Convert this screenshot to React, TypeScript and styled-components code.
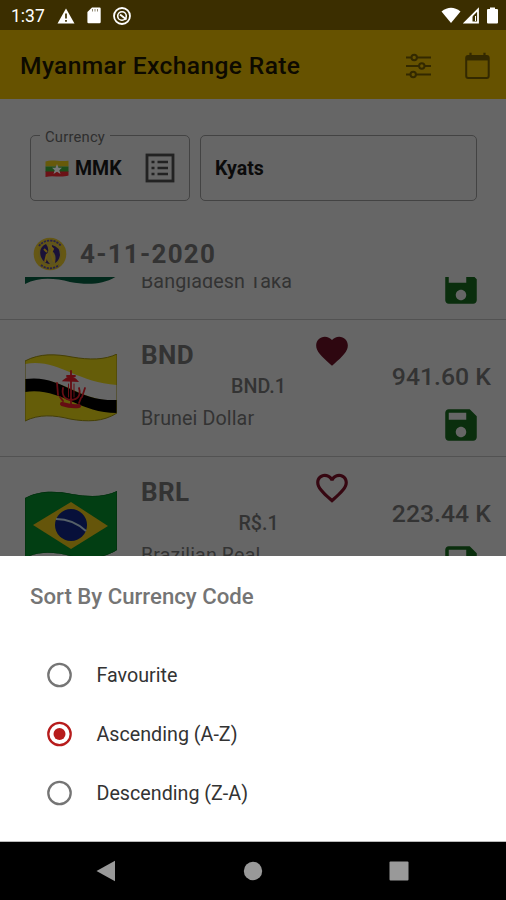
import React from "react";
import styled, { createGlobalStyle } from "styled-components";

const GlobalStyle = createGlobalStyle`
  * { box-sizing: border-box; }
  body { margin: 0; background: #000; font-family: Roboto, "Liberation Sans", sans-serif; }
  svg { display: block; flex: none; }
`;

const Screen = styled.div`
  width: 506px;
  height: 900px;
  display: flex;
  flex-direction: column;
  overflow: hidden;
  background: #666;
  color: #333;
`;

const StatusBar = styled.div`
  height: 30px;
  flex: none;
  display: flex;
  align-items: center;
  justify-content: space-between;
  padding: 1px 6px 0 11px;
  background: #3b2e00;
  color: #fff;
`;

const StatusGroup = styled.div<{ $gap: number }>`
  display: flex;
  align-items: center;
  gap: ${(p) => p.$gap}px;
`;

const Label = styled.span<{ $size: number; $weight?: number; $spacing?: number; $color?: string }>`
  font-size: ${(p) => p.$size}px;
  font-weight: ${(p) => p.$weight ?? 400};
  letter-spacing: ${(p) => p.$spacing ?? 0}px;
  color: ${(p) => p.$color ?? "inherit"};
  white-space: nowrap;
`;

const AppBar = styled.header`
  height: 69px;
  flex: none;
  display: flex;
  align-items: center;
  padding: 2px 15px 0 20px;
  background: #665200;
`;

const Title = styled.h1`
  flex: 1;
  margin: 0;
  font-size: 24.6px;
  font-weight: 500;
  letter-spacing: 0.37px;
  color: #0d0a00;
  white-space: nowrap;
`;

const Actions = styled.div`
  display: flex;
  align-items: center;
  gap: 32px;
`;

const Fields = styled.div`
  flex: none;
  display: flex;
  gap: 10px;
  padding: 36px 29px 30px 30px;
`;

const Field = styled.div<{ $width: number }>`
  width: ${(p) => p.$width}px;
  height: 66px;
  padding: 0 14px;
  display: flex;
  align-items: center;
  border: 1.5px solid #434343;
  border-radius: 5px;
  position: relative;
  color: #0b0b0b;
`;

const FieldCaption = styled.span`
  position: absolute;
  top: -7px;
  left: 9px;
  padding: 0 5px;
  background: #666;
  color: #2e2e2e;
  font-size: 14.8px;
  line-height: 16px;
  letter-spacing: 0.2px;
`;

const FieldValue = styled.div`
  display: flex;
  align-items: center;
  gap: 6px;
  flex: 1;
  padding-top: 1px;
`;

const DateRow = styled.div`
  flex: none;
  height: 46px;
  display: flex;
  align-items: center;
  padding: 0 0 0 33px;
  gap: 13px;
`;

const List = styled.div`
  flex: 1;
  min-height: 0;
  overflow: hidden;
`;

const ListTrack = styled.div`
  margin-top: -94px;
`;

const Row = styled.div`
  height: 137px;
  display: flex;
  padding: 0 15px 0 25px;
  border-bottom: 1px solid #525252;
`;

const FlagCell = styled.div`
  width: 116px;
  padding-top: 34px;
`;

const Info = styled.div`
  width: 207px;
  display: flex;
  flex-direction: column;
`;

const InfoTop = styled.div`
  display: flex;
  justify-content: space-between;
  height: 52px;
  padding-top: 12px;
  margin-right: -3px;
`;

const Code = styled.div`
  padding-top: 7px;
  font-size: 26px;
  line-height: 32px;
  font-weight: 700;
  letter-spacing: 0.4px;
`;

const Symbol = styled.div`
  width: 235px;
  height: 27px;
  padding-top: 3px;
  text-align: center;
  font-size: 19.7px;
  line-height: 24px;
  font-weight: 500;
`;

const Name = styled.div`
  padding-top: 8px;
  font-size: 19.7px;
  line-height: 24px;
  letter-spacing: 0.1px;
  white-space: nowrap;
`;

const PriceCell = styled.div`
  flex: 1;
  display: flex;
  flex-direction: column;
  align-items: flex-end;
  padding-top: 42px;
`;

const Price = styled.div`
  height: 30px;
  font-size: 24.8px;
  line-height: 30px;
  font-weight: 500;
  white-space: nowrap;
`;

const SaveSlot = styled.div`
  padding: 11.5px 9px 0 0;
`;

const Sheet = styled.section`
  flex: none;
  height: 286px;
  background: #fff;
  border-bottom: 1px solid #bbb;
`;

const SheetTitle = styled.h2`
  margin: 0;
  padding: 25px 0 0 30px;
  font-size: 22.2px;
  line-height: 30px;
  font-weight: 500;
  color: #757575;
`;

const Options = styled.div`
  padding-top: 34px;
`;

const Option = styled.div`
  height: 59.2px;
  display: flex;
  align-items: center;
  padding-left: 47px;
  gap: 23.5px;

  ${Label} {
    padding-top: 2px;
  }
`;

const NavBar = styled.nav`
  flex: none;
  height: 58px;
  display: flex;
  align-items: center;
  justify-content: space-between;
  padding: 0 97px 0 96px;
  background: #000;
`;

const HEART = "M12 21.35l-1.45-1.32C5.4 15.36 2 12.28 2 8.5 2 5.42 4.42 3 7.5 3c1.74 0 3.41.81 4.5 2.09C13.09 3.81 14.76 3 16.5 3 19.58 3 22 5.42 22 8.5c0 3.78-3.4 6.86-8.55 11.54L12 21.35z";
const HEART_OUTLINE = "M16.5 3c-1.74 0-3.41.81-4.5 2.09C10.91 3.81 9.24 3 7.5 3 4.42 3 2 5.42 2 8.5c0 3.78 3.4 6.86 8.55 11.54L12 21.35l1.45-1.32C18.6 15.36 22 12.28 22 8.5 22 5.42 19.58 3 16.5 3zm-4.4 15.55l-.1.1-.1-.1C7.14 14.24 4 11.39 4 8.5 4 6.5 5.5 5 7.5 5c1.54 0 3.04.99 3.57 2.36h1.87C13.46 5.99 14.96 5 16.5 5c2 0 3.5 1.5 3.5 3.5 0 2.89-3.14 5.74-7.9 10.05z";
const SAVE = "M17 3H5c-1.11 0-2 .9-2 2v14c0 1.1.89 2 2 2h14c1.1 0 2-.9 2-2V7l-4-4zm-5 16c-1.66 0-3-1.34-3-3s1.34-3 3-3 3 1.34 3 3-1.34 3-3 3zm3-10H5V5h10v4z";

const Heart = ({ filled }: { filled: boolean }) => (
  <svg width="38" height="38" viewBox="0 0 24 24" fill={filled ? "#2e0710" : "#360711"}>
    <path d={filled ? HEART : HEART_OUTLINE} />
  </svg>
);

const SaveIcon = () => (
  <svg width="42" height="42" viewBox="0 0 24 24" fill="#0a2e0d">
    <path d={SAVE} />
  </svg>
);

const CLOTH = "M0 7C15 -1 31 0 47 3C64 6 80 6 92 0V59C78 68 62 68 45 65C29 61 14 60 0 67Z";

const BruneiFlag = () => (
  <svg width="92" height="68" viewBox="0 0 92 68">
    <clipPath id="bn"><path d={CLOTH} /></clipPath>
    <g clipPath="url(#bn)">
      <rect width="92" height="68" fill="#655d09" />
      <path d="M0 10C32 4 50 28 92 31V47C50 47 38 20 0 27Z" fill="#666" />
      <path d="M0 25C37 20 48 47 92 46V59C52 59 36 33 0 38Z" fill="#000" />
    </g>
    <path d={CLOTH} fill="none" stroke="#453f06" strokeWidth="1" />
    <g fill="none" stroke="#650d13" strokeWidth="1.800" strokeLinecap="round">
      <path d="M46 17V50M42 22H50M38 34Q36 45 46 46Q57 45 54 34M32 29L33 41M60 34L57 43M35 43L38 47M56 44L54 49" />
      <path d="M39 26.500Q46 20 52 27Z" fill="#650d13" />
      <path d="M37 50Q46 53 54 52" strokeWidth="4" />
      <path d="M43.500 30V43M49 30V43" strokeWidth="1" />
    </g>
  </svg>
);

const BrazilFlag = () => (
  <svg width="92" height="68" viewBox="0 0 92 68">
    <clipPath id="br"><path d={CLOTH} /></clipPath>
    <path d={CLOTH} fill="#023e13" />
    <path d="M8 34L46 11L83 35L46 58Z" fill="#65550a" />
    <circle cx="46" cy="34" r="16" fill="#07103a" />
    <path d="M31 28Q48 28 61 40" fill="none" stroke="#566068" strokeWidth="2" />
    <path d={CLOTH} fill="none" stroke="#022c0d" strokeWidth="1" clipPath="url(#br)" />
  </svg>
);

const BangladeshFlag = () => (
  <svg width="92" height="68" viewBox="0 0 92 68">
    <path d={CLOTH} fill="#02291c" />
    <circle cx="42" cy="33" r="18" fill="#5d0d18" />
  </svg>
);

const MyanmarFlag = () => (
  <svg width="24" height="18" viewBox="0 0 24 18">
    <clipPath id="mm"><path d="M.5 1.5C7-.8 14 2 23.500 .8V15.500C16 18 8 15 .5 17Z" /></clipPath>
    <g clipPath="url(#mm)">
      <rect width="24" height="6.500" fill="#675a0b" />
      <rect y="6.500" width="24" height="5.500" fill="#1c4d1a" />
      <rect y="11.500" width="24" height="7" fill="#6b1216" />
      <path d="M12 4L13.500 7.800H17L14.300 10.200L15.500 14L12 11.700L8.500 14L9.700 10.200L7 7.800H10.500Z" fill="#777" />
    </g>
  </svg>
);

const BankSeal = () => (
  <svg width="34" height="34" viewBox="0 0 34 34">
    <circle cx="17" cy="17" r="16.300" fill="#655714" />
    <path d="M6 9A13.800 13.800 0 0 1 28 9M8 28A14 14 0 0 0 26 28" fill="none" stroke="#292347" strokeWidth="1.800" strokeDasharray="2.200 1" />
    <circle cx="17" cy="17" r="11.300" fill="#5f541f" />
    <path d="M13 7Q5 11 8 20Q11 27 17 27Q10 20 15 15Q16 11 13 7ZM19 8Q27 10 27 18Q26 24 22 26Q24 17 19 14Z" fill="#1a1138" />
    <path d="M16 8L20 12L18 16L21 25M14 17L12 25M11 12L14 15" fill="none" stroke="#6c5812" strokeWidth="2" />
  </svg>
);

type Rate = { code: string; symbol: string; name: string; price: string; favourite: boolean; Flag: React.FC };

const rates: Rate[] = [
  { code: "", symbol: "", name: "Bangladesh Taka", price: "", favourite: false, Flag: BangladeshFlag },
  { code: "BND", symbol: "BND.1", name: "Brunei Dollar", price: "941.60 K", favourite: true, Flag: BruneiFlag },
  { code: "BRL", symbol: "R$.1", name: "Brazilian Real", price: "223.44 K", favourite: false, Flag: BrazilFlag },
];

const Radio = ({ checked }: { checked: boolean }) => (
  <svg width="26" height="26" viewBox="0 0 26 26">
    <circle cx="12.500" cy="13" r="11.200" fill="none" stroke={checked ? "#b71c1c" : "#757575"} strokeWidth="2.300" />
    {checked && <circle cx="12.500" cy="13" r="6" fill="#b71c1c" />}
  </svg>
);

const options = ["Favourite", "Ascending (A-Z)", "Descending (Z-A)"];

export default function App() {
  return (
    <Screen>
      <GlobalStyle />
      <StatusBar>
        <StatusGroup $gap={12}>
          <Label $size={17.5}>1:37</Label>
          <svg width="18" height="16" viewBox="0 0 18 16">
            <path d="M9 .5L17.500 15.500H.5Z" fill="#fff" />
            <path d="M9 5.500V10.500M9 12V13.800" stroke="#3b2e00" strokeWidth="1.700" />
          </svg>
          <svg width="14" height="17" viewBox="0 0 14 17">
            <path d="M5 .5H12.500Q13.700 .5 13.700 1.800V15Q13.700 16.300 12.500 16.300H1.600Q.4 16.300 .4 15V5Z" fill="#fff" />
            <path d="M5.500 2V4.500M8 2V4.500M10.500 2V4.500" stroke="#8d8670" strokeWidth="1" />
          </svg>
          <svg width="18" height="18" viewBox="0 0 18 18" fill="none" stroke="#fff">
            <circle cx="9" cy="9" r="8" strokeWidth="1.800" />
            <circle cx="9" cy="9" r="4.300" strokeWidth="1.600" />
            <path d="M7 7.500L13.500 12.500" strokeWidth="1.800" />
          </svg>
        </StatusGroup>
        <StatusGroup $gap={2}>
          <svg width="20" height="17" viewBox="0 0 20 17"><path d="M.5 4.500Q10-3 19.500 4.500L10 16Z" fill="#fff" /></svg>
          <svg width="17" height="17" viewBox="0 0 17 17">
            <path d="M15 2.500V15.500H2Z" fill="none" stroke="#fff" strokeWidth="1.800" />
            <path d="M9.500 7.500V15H3Z" fill="#fff" />
            <path d="M12.500 9V14" stroke="#fff" strokeWidth="1" />
          </svg>
          <svg width="18" height="17" viewBox="0 0 18 17"><path d="M8 .5H13V2H15Q16 2 16 3V15.500Q16 16.500 15 16.500H6Q5 16.500 5 15.500V3Q5 2 6 2H8Z" fill="#fff" /></svg>
        </StatusGroup>
      </StatusBar>

      <AppBar>
        <Title>Myanmar Exchange Rate</Title>
        <Actions>
          <svg width="27" height="26" viewBox="0 0 27 26" fill="none" stroke="#332900" strokeWidth="2">
            <path d="M1 4.500H6.500M12 4.500H26M1 13H14M19.500 13H26M1 21.500H5.500M11 21.500H26" />
            <circle cx="9.200" cy="4.500" r="2.700" /><circle cx="16.800" cy="13" r="2.700" /><circle cx="8.200" cy="21.500" r="2.700" />
          </svg>
          <svg width="27" height="28" viewBox="0 0 27 28" fill="none" stroke="#332900">
            <rect x="2.200" y="4" width="22.500" height="22" rx="2" strokeWidth="2" />
            <path d="M2 6.200H25" strokeWidth="4.500" />
            <path d="M6.500 .8V5M20.500 .8V5" strokeWidth="2.200" />
          </svg>
        </Actions>
      </AppBar>

      <Fields>
        <Field $width={160}>
          <FieldCaption>Currency</FieldCaption>
          <FieldValue>
            <MyanmarFlag />
            <Label $size={19.5} $weight={700}>MMK</Label>
          </FieldValue>
          <svg width="30" height="30" viewBox="0 0 30 30" fill="none" stroke="#222" strokeWidth="2.800">
            <rect x="2" y="2" width="26" height="26" />
            <path d="M6.500 9H9.500M6.500 15H9.500M6.500 21H9.500M12.500 9H23M12.500 15H23M12.500 21H23" strokeWidth="2.600" />
          </svg>
        </Field>
        <Field $width={277}>
          <FieldValue>
            <Label $size={19.5} $weight={700}>Kyats</Label>
          </FieldValue>
        </Field>
      </Fields>

      <DateRow>
        <BankSeal />
        <Label $size={26} $weight={700} $spacing={1.25}>4-11-2020</Label>
      </DateRow>

      <List>
        <ListTrack>
          {rates.map(({ code, symbol, name, price, favourite, Flag }) => (
            <Row key={name}>
              <FlagCell><Flag /></FlagCell>
              <Info>
                <InfoTop><Code>{code}</Code><Heart filled={favourite} /></InfoTop>
                <Symbol>{symbol}</Symbol>
                <Name>{name}</Name>
              </Info>
              <PriceCell>
                <Price>{price}</Price>
                <SaveSlot><SaveIcon /></SaveSlot>
              </PriceCell>
            </Row>
          ))}
        </ListTrack>
      </List>

      <Sheet>
        <SheetTitle>Sort By Currency Code</SheetTitle>
        <Options>
          {options.map((text, i) => (
            <Option key={text}>
              <Radio checked={i === 1} />
              <Label $size={19.7} $color="#333">{text}</Label>
            </Option>
          ))}
        </Options>
      </Sheet>

      <NavBar>
        <svg width="20" height="22" viewBox="0 0 20 22"><path d="M.5 11L19 .8V21.200Z" fill="#999" /></svg>
        <svg width="20" height="20" viewBox="0 0 20 20"><circle cx="10" cy="10" r="9.200" fill="#999" /></svg>
        <svg width="20" height="20" viewBox="0 0 20 20"><rect x=".5" y=".5" width="19" height="19" rx="1" fill="#999" /></svg>
      </NavBar>
    </Screen>
  );
}
